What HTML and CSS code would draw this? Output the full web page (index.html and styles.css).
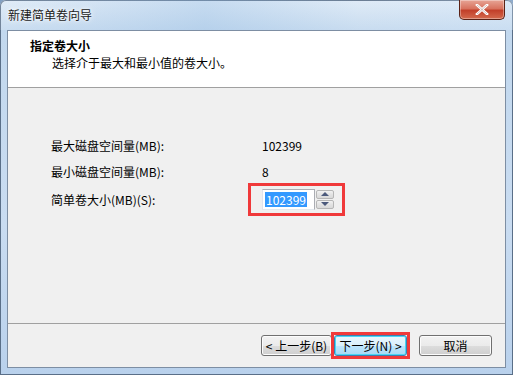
FILE: index.html
```html
<!DOCTYPE html>
<html lang="zh-CN">
<head>
    <meta charset="UTF-8">
    <title>新建简单卷向导</title>
    <link rel="stylesheet" href="styles.css">
</head>
<body>
    <div class="window">
        <div class="titlebar">
            <span class="title">新建简单卷向导</span>
            <button class="close" type="button">
                <svg width="14" height="11" viewBox="0 0 14 11">
                    <path d="M2 1 L12 10 M12 1 L2 10" stroke="#fff" stroke-width="2.6" stroke-linecap="square"/>
                    <path d="M2 1 L12 10 M12 1 L2 10" stroke="#6b2a20" stroke-width="0.6" fill="none" opacity="0.5"/>
                </svg>
            </button>
        </div>
        <div class="client">
            <div class="header">
                <div class="head-title">指定卷大小</div>
                <div class="head-sub">选择介于最大和最小值的卷大小。</div>
            </div>
            <div class="body">
                <div class="row">
                    <span class="label">最大磁盘空间量(MB):</span>
                    <span class="value">102399</span>
                </div>
                <div class="row">
                    <span class="label">最小磁盘空间量(MB):</span>
                    <span class="value">8</span>
                </div>
                <div class="row row-size">
                    <span class="label">简单卷大小(MB)(S):</span>
                    <div class="mark mark-spin">
                        <div class="spin">
                            <span class="spin-text"><span class="sel">102399</span></span>
                            <div class="spin-btns">
                                <span class="spin-btn"><i class="up"></i></span>
                                <span class="spin-btn"><i class="down"></i></span>
                            </div>
                        </div>
                    </div>
                </div>
            </div>
            <div class="footer">
                <button class="btn btn-back" type="button">&lt; 上一步(B)</button>
                <div class="mark mark-next">
                    <button class="btn btn-next" type="button">下一步(N) &gt;</button>
                </div>
                <button class="btn btn-cancel" type="button">取消</button>
            </div>
        </div>
    </div>
</body>
</html>
```

FILE: styles.css
```css
body {
    margin: 0;
    font-family: "Noto Sans CJK SC", "DejaVu Sans", sans-serif;
    font-size: 12px;
    color: #000;
    background: #6c8fb8;
}

.window {
    width: 513px;
    height: 375px;
    box-sizing: border-box;
    padding: 0 7px 7px 7px;
    display: flex;
    flex-direction: column;
    background: linear-gradient(180deg, #dce9f6 0%, #c2d8ee 30px, #c9dcf1 60%, #b9d1ec 100%);
    border-radius: 6px 6px 0 0;
    box-shadow: inset 0 0 0 1px #5a6f88;
}

.titlebar {
    height: 30px;
    display: flex;
    justify-content: space-between;
    align-items: flex-start;
    background: linear-gradient(90deg, rgba(255,255,255,0.15), rgba(160,195,230,0.35) 40%, rgba(255,255,255,0.1) 70%, rgba(220,235,250,0.3));
    margin: 0 -7px;
    padding: 0 7px;
}

.title {
    padding: 6px 0 0 1px;
    font-size: 12px;
    color: #1a1a1a;
    text-shadow: 0 0 6px #fff, 0 0 3px #fff;
}

.close {
    width: 46px;
    height: 20px;
    margin-right: 1px;
    padding: 0;
    border: 1px solid #5a2216;
    border-top: none;
    border-radius: 0 0 5px 5px;
    background: linear-gradient(180deg, #e7a596 0%, #d8735f 45%, #c2402a 55%, #d46a4d 100%);
    box-shadow: inset 0 0 0 1px rgba(255,255,255,0.35);
    display: flex;
    align-items: center;
    justify-content: center;
}

.client {
    flex: 1;
    display: flex;
    flex-direction: column;
    background: #f0f0f0;
    border: 1px solid #7d8ea3;
}

.header {
    height: 57px;
    background: #fff;
    border-bottom: 1px solid #a0a0a0;
    box-sizing: border-box;
    padding: 7px 0 0 22px;
}

.head-title {
    font-weight: bold;
    line-height: 16px;
}

.head-sub {
    padding-left: 22px;
    line-height: 18px;
}

.body {
    flex: 1;
    padding: 44px 0 0 43px;
    border-bottom: 1px solid #a0a0a0;
}

.row {
    display: flex;
    align-items: center;
    height: 26px;
}

.row-size {
    height: 32px;
    margin-top: -1px;
}

.label {
    width: 210px;
}

.value {
    padding-left: 1px;
}

.mark {
    border: 3px solid #f0393a;
}

.mark-spin {
    margin-left: -13px;
    padding: 3px 8px 3px 11px;
}

.spin {
    display: flex;
    align-items: stretch;
    height: 21px;
}

.spin-text {
    width: 49px;
    border: 1px solid #abadb3;
    border-left-color: #e2e3ea;
    border-bottom-color: #e3e9ef;
    background: #fff;
    display: flex;
    align-items: center;
    padding-left: 2px;
}

.sel {
    background: #3399ff;
    color: #fff;
    line-height: 15px;
    padding: 0 1px;
}

.spin-btns {
    display: flex;
    flex-direction: column;
    gap: 1px;
    margin-left: 1px;
    padding: 1px 0;
}

.spin-btn {
    width: 16px;
    flex: 1;
    border: 1px solid #b6b6b6;
    border-radius: 2px;
    background: linear-gradient(180deg, #f2f2f2, #e3e3e3 50%, #d9d9d9);
    display: flex;
    align-items: center;
    justify-content: center;
}

.spin-btn i {
    width: 0;
    height: 0;
    border-left: 4px solid transparent;
    border-right: 4px solid transparent;
}

.spin-btn .up {
    border-bottom: 4px solid #4c5a7c;
}

.spin-btn .down {
    border-top: 4px solid #4c5a7c;
}

.footer {
    height: 43px;
    display: flex;
    align-items: center;
    padding-left: 253px;
}

.btn {
    font-family: inherit;
    font-size: 12px;
    height: 21px;
    padding: 0;
    border: 1px solid #707070;
    border-radius: 3px;
    background: linear-gradient(180deg, #f2f2f2 0%, #ebebeb 50%, #dddddd 51%, #cfcfcf 100%);
    box-shadow: inset 0 0 0 1px #fcfcfc;
    color: #000;
}

.btn-back {
    width: 71px;
}

.mark-next {
    padding: 0;
    margin-left: -1px;
}

.btn-next {
    width: 73px;
    display: block;
    border-color: #3c7fb1;
    background: linear-gradient(180deg, #eaf6fd 0%, #d9f0fc 50%, #bee6fd 51%, #a7d9f5 100%);
    box-shadow: inset 0 0 0 1px #48d7f5;
}

.btn-cancel {
    width: 73px;
    margin-left: 9px;
}
```
